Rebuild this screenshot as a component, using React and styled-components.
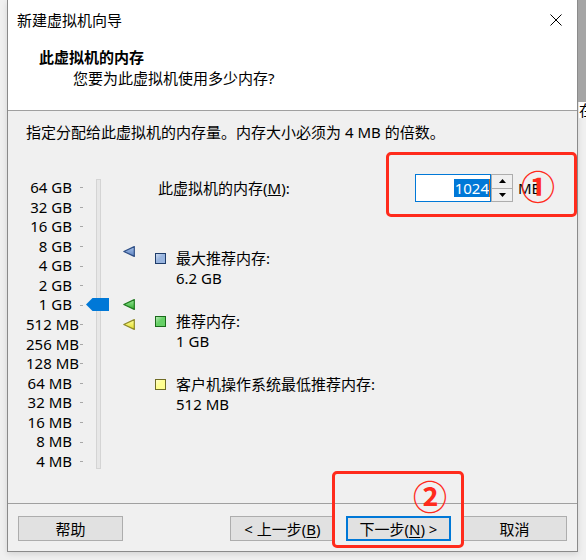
import React from 'react';
import styled, { createGlobalStyle } from 'styled-components';

const ROW = 19.57;

const sizes = ['64 GB', '32 GB', '16 GB', '8 GB', '4 GB', '2 GB', '1 GB', '512 MB', '256 MB', '128 MB', '64 MB', '32 MB', '16 MB', '8 MB', '4 MB'];

const markers = [
    { key: 'max', top: 72, fill: ['#a9c3ea', '#5a80c0'], stroke: '#2f4f86' },
    { key: 'rec', top: 125, fill: ['#9be69b', '#2fae2f'], stroke: '#1f7a1f' },
    { key: 'min', top: 145, fill: ['#ffff9c', '#e2dc2a'], stroke: '#8e8a2a' },
];

const groups = [
    { key: 'max', title: '最大推荐内存:', value: '6.2 GB', fill: '#98b4de', border: '#1e3c6a' },
    { key: 'rec', title: '推荐内存:', value: '1 GB', fill: '#66d066', border: '#1a6a1a' },
    { key: 'min', title: '客户机操作系统最低推荐内存:', value: '512 MB', fill: '#ffff90', border: '#6f6c25' },
];

const GlobalStyle = createGlobalStyle`
html, body {
    margin: 0;
    padding: 0;
}
body {
    width: 586px;
    height: 560px;
    overflow: hidden;
    background: #f0f0f0;
    font-family: "Noto Sans", "Noto Sans CJK SC", sans-serif;
    font-size: 15px;
    color: #000;
}
`;

function App() {
    return (
        <Desktop>
            <GlobalStyle />
            <LeftGap />
            <Window>
                <TitleBar>
                    <span>新建虚拟机向导</span>
                    <svg width="12" height="12" viewBox="0 0 12 12">
                        <path d="M0.5 0.5 L11.5 11.5 M11.5 0.5 L0.5 11.5" stroke="#000" strokeWidth="1" />
                    </svg>
                </TitleBar>
                <Header>
                    <HeaderTitle>此虚拟机的内存</HeaderTitle>
                    <HeaderSub>您要为此虚拟机使用多少内存?</HeaderSub>
                </Header>
                <Body>
                    <Intro>指定分配给此虚拟机的内存量。内存大小必须为 4 MB 的倍数。</Intro>
                    <Content>
                        <SliderArea>
                            <Scale>
                                {sizes.map((s) => (
                                    <ScaleRow key={s}>
                                        <ScaleLabel>{s}</ScaleLabel>
                                        <Tick />
                                    </ScaleRow>
                                ))}
                            </Scale>
                            <Track />
                            <Thumb width="23" height="13" viewBox="0 0 23 13">
                                <polygon points="0,6.5 6.5,0 23,0 23,13 6.5,13" fill="#0078d7" />
                            </Thumb>
                        </SliderArea>
                        <MarkerCol>
                            {markers.map((m) => (
                                <Marker key={m.key} $top={m.top} width="12" height="11" viewBox="0 0 12 11">
                                    <defs>
                                        <linearGradient id={'g-' + m.key} x1="0" y1="0" x2="0" y2="1">
                                            <stop offset="0" stopColor={m.fill[0]} />
                                            <stop offset="1" stopColor={m.fill[1]} />
                                        </linearGradient>
                                    </defs>
                                    <polygon points="0.8,5.5 11.3,0.6 11.3,10.4" fill={'url(#g-' + m.key + ')'} stroke={m.stroke} strokeWidth="1.2" strokeLinejoin="round" />
                                </Marker>
                            ))}
                        </MarkerCol>
                        <InfoCol>
                            <MemoryRow>
                                <MemLabel>此虚拟机的内存(<u>M</u>):</MemLabel>
                                <SpinBox>
                                    <Selected>1024</Selected>
                                    <Caret />
                                </SpinBox>
                                <SpinButtons>
                                    <SpinButton>
                                        <svg width="7" height="4" viewBox="0 0 7 4"><polygon points="3.5,0 7,4 0,4" fill="#000" /></svg>
                                    </SpinButton>
                                    <SpinButton>
                                        <svg width="7" height="4" viewBox="0 0 7 4"><polygon points="0,0 7,0 3.5,4" fill="#000" /></svg>
                                    </SpinButton>
                                </SpinButtons>
                                <Unit>MB</Unit>
                            </MemoryRow>
                            {groups.map((g) => (
                                <Group key={g.key}>
                                    <Swatch $fill={g.fill} $border={g.border} />
                                    <GroupText>
                                        <div>{g.title}</div>
                                        <div>{g.value}</div>
                                    </GroupText>
                                </Group>
                            ))}
                        </InfoCol>
                    </Content>
                </Body>
                <Footer>
                    <Button>帮助</Button>
                    <Spacer />
                    <Button>&lt; 上一步(<u>B</u>)</Button>
                    <Button $primary>下一步(<u>N</u>) &gt;</Button>
                    <Button>取消</Button>
                </Footer>
            </Window>
            <RightStrip>
                <StripShade />
                <StripPeek>在</StripPeek>
            </RightStrip>

            <Callout $left={386} $top={152} $width={191} $height={65} />
            <CircleNum $cx={538} $cy={186}>①</CircleNum>
            <Callout $left={332} $top={471} $width={132} $height={77} />
            <CircleNum $cx={430} $cy={496}>②</CircleNum>
        </Desktop>
    );
}

const Desktop = styled.div`
    position: relative;
    display: flex;
    width: 586px;
    height: 560px;
    background: #f0f0f0;
`;

const LeftGap = styled.div`
    width: 7px;
    flex-shrink: 0;
`;

const Window = styled.div`
    width: 571px;
    height: 552px;
    box-sizing: border-box;
    border: 1px solid #8a8a8a;
    border-top: none;
    display: flex;
    flex-direction: column;
    background: #f0f0f0;
    box-shadow: 0 2px 6px rgba(0, 0, 0, 0.12);
`;

const TitleBar = styled.div`
    height: 40px;
    flex-shrink: 0;
    display: flex;
    align-items: center;
    justify-content: space-between;
    padding: 0 15px 1px 9px;
    box-sizing: border-box;
    background: #fff;
    line-height: 20px;
`;

const Header = styled.div`
    height: 71px;
    flex-shrink: 0;
    box-sizing: border-box;
    padding: 7px 0 0 31px;
    background: #fff;
    border-bottom: 1px solid #a0a0a0;
    line-height: 20px;
`;

const HeaderTitle = styled.div`
    font-weight: bold;
`;

const HeaderSub = styled.div`
    padding-left: 34px;
    margin-top: 1px;
`;

const Body = styled.div`
    flex: 1;
    padding: 11px 0 0 18px;
    line-height: 20px;
`;

const Intro = styled.div`
    height: 20px;
`;

const Content = styled.div`
    display: flex;
    margin-top: 32px;
`;

const SliderArea = styled.div`
    position: relative;
    display: flex;
    padding-top: 4px;
`;

const Scale = styled.div`
    display: flex;
    flex-direction: column;
`;

const ScaleRow = styled.div`
    height: ${ROW}px;
    display: flex;
    align-items: center;
`;

const ScaleLabel = styled.span`
    width: 46px;
    text-align: right;
    white-space: nowrap;
    line-height: ${ROW}px;
`;

const Tick = styled.span`
    width: 3px;
    height: 1px;
    margin-left: 8px;
    background: #a8a8a8;
`;

const Track = styled.div`
    width: 5px;
    height: 290px;
    margin: 1px 0 0 13px;
    box-sizing: border-box;
    border: 1px solid #d4d4d4;
    background: #e7e7e7;
`;

const Thumb = styled.svg`
    position: absolute;
    left: 60px;
    top: 124px;
`;

const MarkerCol = styled.div`
    position: relative;
    width: 12px;
    margin-left: 22px;
`;

const Marker = styled.svg`
    position: absolute;
    left: 0;
    top: ${(p) => p.$top}px;
`;

const InfoCol = styled.div`
    flex: 1;
    margin-left: 20px;
`;

const MemoryRow = styled.div`
    display: flex;
    align-items: center;
    height: 28px;
`;

const MemLabel = styled.span`
    width: 260px;
    box-sizing: border-box;
    padding-left: 3px;
    white-space: nowrap;
`;

const SpinBox = styled.div`
    width: 76px;
    height: 28px;
    box-sizing: border-box;
    border: 1px solid #0078d7;
    background: #fff;
    display: flex;
    align-items: center;
    justify-content: flex-end;
`;

const Selected = styled.span`
    background: #0078d7;
    color: #fff;
    line-height: 18px;
    height: 18px;
    padding: 0 0 0 1px;
`;

const Caret = styled.span`
    width: 1px;
    height: 18px;
    background: #c96a12;
`;

const SpinButtons = styled.div`
    display: flex;
    flex-direction: column;
    width: 22px;
    height: 28px;
`;

const SpinButton = styled.div`
    flex: 1;
    box-sizing: border-box;
    border: 1px solid #adadad;
    background: #f0f0f0;
    display: flex;
    align-items: center;
    justify-content: center;
    & + & {
        border-top: none;
    }
`;

const Unit = styled.span`
    margin-left: 5px;
`;

const Group = styled.div`
    display: flex;
    margin-top: 23px;
    &:nth-child(2) {
        margin-top: 46px;
    }
`;

const Swatch = styled.div`
    width: 11px;
    height: 11px;
    margin-top: 5px;
    box-sizing: border-box;
    border: 1px solid ${(p) => p.$border};
    background: linear-gradient(135deg, #fff8 0%, ${(p) => p.$fill} 45%);
    background-color: ${(p) => p.$fill};
`;

const GroupText = styled.div`
    margin-left: 10px;
    line-height: 20px;
`;

const Footer = styled.div`
    height: 48px;
    flex-shrink: 0;
    box-sizing: border-box;
    border-top: 1px solid #a0a0a0;
    padding: 12px 10px 0 10px;
    display: flex;
    align-items: flex-start;
    gap: 11px;
`;

const Spacer = styled.div`
    flex: 1;
`;

const Button = styled.div`
    width: 105px;
    height: 25px;
    box-sizing: border-box;
    border: ${(p) => (p.$primary ? '2px solid #0078d7' : '1px solid #adadad')};
    background: #e1e1e1;
    display: flex;
    align-items: center;
    justify-content: center;
    line-height: 20px;
    white-space: nowrap;
    & u {
        text-underline-offset: 2px;
    }
`;

const RightStrip = styled.div`
    width: 8px;
    flex-shrink: 0;
    overflow: hidden;
    display: flex;
    flex-direction: column;
`;

const StripShade = styled.div`
    height: 102px;
    background: #a5a5a5;
`;

const StripPeek = styled.div`
    height: 16px;
    background: #fff;
    line-height: 16px;
    font-size: 15px;
    margin-left: 1px;
    white-space: nowrap;
`;

const Callout = styled.div`
    position: absolute;
    left: ${(p) => p.$left}px;
    top: ${(p) => p.$top}px;
    width: ${(p) => p.$width}px;
    height: ${(p) => p.$height}px;
    box-sizing: border-box;
    border: 3px solid #ff2b1c;
    border-radius: 5px;
`;

const CircleNum = styled.span`
    position: absolute;
    left: ${(p) => p.$cx - 17}px;
    top: ${(p) => p.$cy - 17}px;
    width: 34px;
    height: 34px;
    font-family: "Noto Sans CJK SC", sans-serif;
    font-size: 34px;
    line-height: 34px;
    font-weight: bold;
    text-align: center;
    color: #ff2b1c;
`;

export default App;
